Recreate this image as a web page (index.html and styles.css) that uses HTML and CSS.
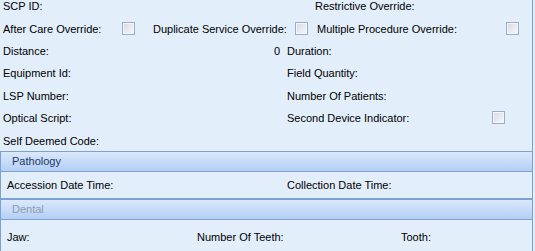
FILE: index.html
```html
<!DOCTYPE html>
<html lang="en">
<head>
    <meta charset="UTF-8">
    <meta name="viewport" content="width=device-width, initial-scale=1.0">
    <title>Service Details</title>
    <link rel="stylesheet" href="styles.css">
</head>
<body>

<div class="panel">
    <div class="fields">
        <div class="row first two">
            <span>SCP ID:</span>
            <span class="shift">Restrictive Override:</span>
        </div>
        <div class="row three">
            <span class="check-cell c1">After Care Override: <i class="check"></i></span>
            <span class="check-cell c2">Duplicate Service Override: <i class="check"></i></span>
            <span class="check-cell c3">Multiple Procedure Override: <i class="check"></i></span>
        </div>
        <div class="row two">
            <span class="value-cell">Distance: <b class="value">0</b></span>
            <span>Duration:</span>
        </div>
        <div class="row two">
            <span>Equipment Id:</span>
            <span>Field Quantity:</span>
        </div>
        <div class="row two">
            <span>LSP Number:</span>
            <span>Number Of Patients:</span>
        </div>
        <div class="row two">
            <span>Optical Script:</span>
            <span class="check-cell c4">Second Device Indicator: <i class="check"></i></span>
        </div>
        <div class="row two">
            <span>Self Deemed Code:</span>
            <span></span>
        </div>
    </div>

    <div class="group">
        <div class="group-head">Pathology</div>
        <div class="group-body path">
            <span>Accession Date Time:</span>
            <span>Collection Date Time:</span>
        </div>
    </div>

    <div class="group">
        <div class="group-head disabled">Dental</div>
        <div class="group-body dental">
            <span>Jaw:</span>
            <span>Number Of Teeth:</span>
            <span>Tooth:</span>
        </div>
    </div>
</div>

</body>
</html>
```

FILE: styles.css
```css
body { margin: 0; padding: 0; background: #e3eefb; font-family: "Liberation Sans", Arial, sans-serif; font-size: 11px; color: #000; }
.panel { width: 533px; height: 251px; border-right: 1px solid #7ba1d6; box-sizing: border-box; overflow: hidden; }
.fields { padding-left: 3px; margin-top: -5px; height: 156px; }
.row { display: grid; height: 22.4px; align-items: center; white-space: nowrap; }
.row.two { grid-template-columns: 284px 1fr; }
.row.three { grid-template-columns: 150px 164px 1fr; }
.shift { padding-left: 28px; }
.check-cell { position: relative; }
.check { position: absolute; top: 50%; margin-top: -7px; width: 11px; height: 11px; border: 1px solid #9aaecb; box-shadow: inset 0 0 0 1px #f4f6f9; background: linear-gradient(135deg, #d6dbe2, #f6f7f9); }
.c1 .check { left: 119px; }
.c2 .check { left: 142px; }
.c3 .check { left: 189px; }
.c4 .check { left: 205px; }
.value-cell { display: flex; justify-content: space-between; padding-right: 7px; }
.value { font-weight: normal; }
.group { border: 1px solid #7ba1d6; border-right: none; }
.group-head { height: 19px; line-height: 19px; padding-left: 11px; color: #1b3a68; background: linear-gradient(#dbe8fa, #b3cff5); border-bottom: 1px solid #7ba1d6; }
.group-head.disabled { color: #8d9bae; }
.group-body { display: grid; height: 26px; align-items: center; padding-left: 6px; white-space: nowrap; }
.group-body.path { grid-template-columns: 280px 1fr; }
.group-body.dental { grid-template-columns: 190px 204px 1fr; height: 34px; }
```
